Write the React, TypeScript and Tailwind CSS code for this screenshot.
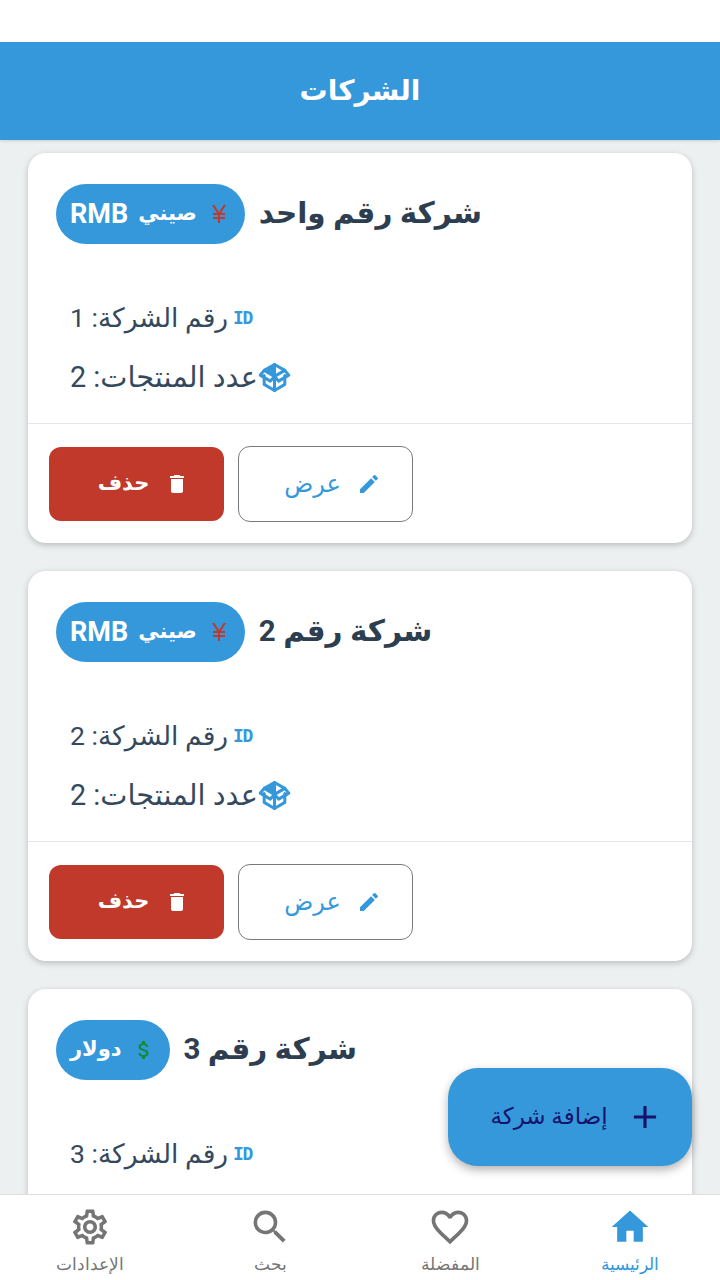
import { MdHome, MdFavoriteBorder, MdSearch, MdOutlineSettings, MdEdit, MdDelete, MdAdd, MdCurrencyYen, MdAttachMoney } from 'react-icons/md'
import type { ReactNode } from 'react'

interface Company {
  title: string
  id: number
  products?: number
  currency: ReactNode
  badge: string
  badgeCode?: string
}

const companies: Company[] = [
  { title: 'شركة رقم واحد', id: 1, products: 2, currency: <MdCurrencyYen size={24} className="text-[#c0392b]" />, badge: 'صيني', badgeCode: 'RMB' },
  { title: 'شركة رقم 2', id: 2, products: 2, currency: <MdCurrencyYen size={24} className="text-[#c0392b]" />, badge: 'صيني', badgeCode: 'RMB' },
  { title: 'شركة رقم 3', id: 3, products: 1, currency: <MdAttachMoney size={24} className="text-[#0f8a3c]" />, badge: 'دولار' },
]

const navItems = [
  { label: 'الإعدادات', icon: <MdOutlineSettings size={42} />, active: false },
  { label: 'بحث', icon: <MdSearch size={44} />, active: false },
  { label: 'المفضلة', icon: <MdFavoriteBorder size={44} />, active: false },
  { label: 'الرئيسية', icon: <MdHome size={44} />, active: true },
]

// open box icon, no match in the icon packages
function BoxIcon() {
  return (
    <svg viewBox="0 0 24 24" width="33" height="33" className="text-[#3498db] shrink-0" fill="none" stroke="currentColor" strokeWidth="2.2" strokeLinejoin="round" strokeLinecap="round">
      <path d="M12 2.5 4.5 6.8 12 11.2Z" fill="currentColor" />
      <path d="M12 2.5 19.5 6.8 12 11.2" />
      <path d="M4.5 10.5V17l7.5 4.5 7.5-4.5v-6.5" />
      <path d="M12 11.2v10.3" />
      <path d="M4.5 6.8 1.6 10.3 9 14.6l3-3.4 3 3.4 7.4-4.3-2.9-3.5" />
    </svg>
  )
}

function CompanyCard({ company }: { company: Company }) {
  return (
    <div className="mx-7 shrink-0 h-[390px] bg-white rounded-[18px] shadow-[0_2px_6px_rgba(0,0,0,0.22)] flex flex-col">
      <div className="flex flex-col items-start pl-7 pt-[31px] h-[270px]">
        <div className="flex items-center gap-[14px] h-[60px]">
          <div className="h-[60px] px-[14px] rounded-full bg-[#3498db] flex flex-row-reverse items-center gap-[10px] justify-center text-white font-bold">
            {company.currency}
            <span className="text-[21px] whitespace-nowrap">{company.badge}</span>
            {company.badgeCode && <span className="text-[27px]">{company.badgeCode}</span>}
          </div>
          <h2 className="font-bold text-[29.5px] leading-none text-[#2c3e50] whitespace-nowrap" dir="rtl">{company.title}</h2>
        </div>
        <div className="flex flex-col gap-[18.5px] mt-[53px] pl-[14px] text-[#34495e] leading-[41px]">
          <div className="flex items-center gap-[5px] h-[41px] text-[26.5px]">
            <span dir="rtl" className="whitespace-nowrap">رقم الشركة: {company.id}</span>
            <span className="font-['DejaVu_Sans_Mono'] font-bold text-[18px] tracking-[-1.5px] text-[#3498db]">ID</span>
          </div>
          {company.products !== undefined && (
            <div className="flex items-center h-[41px] text-[28.8px]">
              <span dir="rtl" className="whitespace-nowrap">عدد المنتجات: {company.products}</span>
              <BoxIcon />
            </div>
          )}
        </div>
      </div>
      <div className="border-t border-[#e6e6e6] flex-1 flex items-center gap-[14px] pl-[21px]">
        <button className="w-[175px] h-[74px] rounded-[12px] bg-[#c0392b] text-white flex items-center justify-center gap-[16px] flex-row-reverse pl-[14px]">
          <MdDelete size={24} />
          <span className="font-bold text-[21px]">حذف</span>
        </button>
        <button className="w-[175px] h-[76px] rounded-[12px] border-[1.5px] border-[#7a7a7a] bg-white text-[#3498db] flex items-center justify-center gap-[16px] flex-row-reverse pl-[14px]">
          <MdEdit size={24} />
          <span className="text-[24px] font-medium">عرض</span>
        </button>
      </div>
    </div>
  )
}

export default function App() {
  return (
    <div className="relative w-[720px] h-[1280px] overflow-hidden flex flex-col bg-[#ecf0f1] font-['Roboto','DejaVu_Sans',sans-serif]">
      <div className="h-[42px] bg-white shrink-0" />
      <header className="h-[98px] bg-[#3498db] shrink-0 flex items-center justify-center shadow-[0_1px_3px_rgba(0,0,0,0.15)]">
        <h1 className="text-white font-bold text-[28px]">الشركات</h1>
      </header>
      <main className="flex-1 min-h-0 overflow-hidden flex flex-col gap-7 pt-[13px]">
        {companies.map(c => <CompanyCard key={c.id} company={c} />)}
      </main>
      <nav className="h-[86px] shrink-0 bg-white border-t border-[#dddddd] grid grid-cols-4">
        {navItems.map(item => (
          <div key={item.label} className={`flex flex-col items-center pt-[10px] ${item.active ? 'text-[#3498db]' : 'text-[#757575]'}`}>
            <div className="h-[44px] flex items-center justify-center">{item.icon}</div>
            <span className="mt-[3px] text-[17px] leading-[24px] font-light">{item.label}</span>
          </div>
        ))}
      </nav>
      <button className="absolute left-[448px] top-[1068px] w-[244px] h-[98px] rounded-[30px] bg-[#3498db] text-[#17126b] flex flex-row-reverse items-center justify-center gap-[18px] pl-[14px] shadow-[0_4px_10px_rgba(0,0,0,0.3)]">
        <MdAdd size={38} />
        <span className="text-[23px]">إضافة شركة</span>
      </button>
    </div>
  )
}
